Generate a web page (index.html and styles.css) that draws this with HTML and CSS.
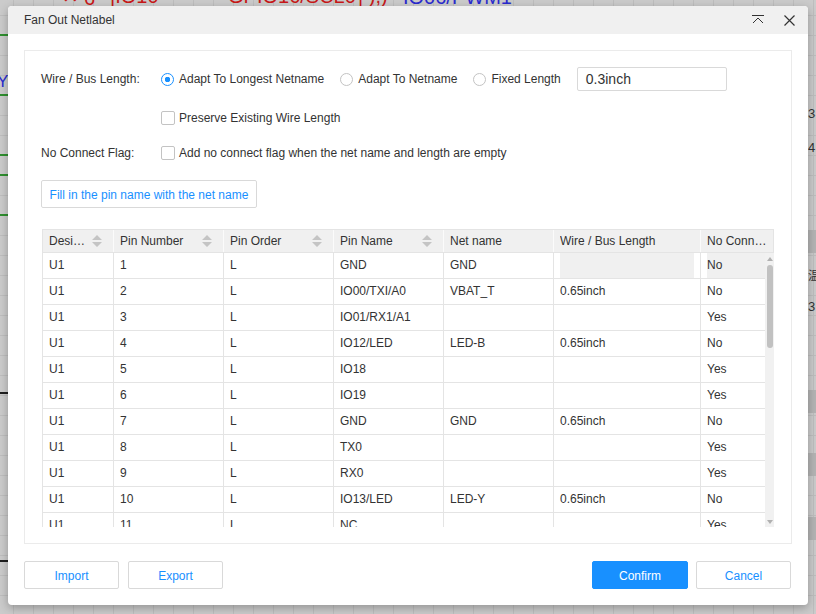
FILE: index.html
```html
<!DOCTYPE html>
<html>
<head>
<meta charset="utf-8">
<title>Fan Out Netlabel</title>
<link rel="stylesheet" href="styles.css">
</head>
<body>
<div class="canvas">
  <span class="cv-red cv-x">✕</span>
  <span class="cv-red cv-6">6</span>
  <span class="cv-red cv-io10">|IO10</span>
  <span class="cv-red cv-gpio">GPIO16/SCL0</span>
  <span class="cv-red cv-par">| ),)</span>
  <span class="cv-blue cv-io06">IO06/PWM1</span>
  <span class="cv-blue cv-y">Y</span>
  <div class="lw lw1"></div>
  <div class="lw lw2"></div>
  <div class="lw lw3"></div>
  <div class="lw lw4"></div>
  <div class="lw lw5"></div>
  <div class="lb lb1"></div>
  <div class="lb lb2"></div>
  <div class="rb rb1"></div>
  <div class="rb rb2"></div>
  <div class="rb rb3"></div>
  <div class="rb rb4"></div>
  <span class="rt rt1">3</span>
  <span class="rt rt2">4.</span>
  <span class="rt rt3">温</span>
  <span class="rt rt4">3</span>
</div>

<div class="dialog">
  <div class="dlg-head">
    <span class="title">Fan Out Netlabel</span>
    <div class="head-icons">
      <svg class="ic-collapse" width="12" height="9" viewBox="0 0 12 9"><path d="M0 0.5H12M1 8L6 3L11 8" fill="none" stroke="#333" stroke-width="1"/></svg>
      <svg class="ic-close" width="11" height="11" viewBox="0 0 11 11"><path d="M0.5 0.5L10.5 10.5M10.5 0.5L0.5 10.5" fill="none" stroke="#333" stroke-width="1.2"/></svg>
    </div>
  </div>

  <div class="dlg-body">
    <div class="panel">
      <div class="row">
        <span class="lbl">Wire / Bus Length:</span>
        <span class="radio on"><i></i>Adapt To Longest Netname</span>
        <span class="radio"><i></i>Adapt To Netname</span>
        <span class="radio"><i></i>Fixed Length</span>
        <div class="input">0.3inch</div>
      </div>
      <div class="row r2">
        <span class="lbl"></span>
        <span class="cb"></span>Preserve Existing Wire Length
      </div>
      <div class="row r3">
        <span class="lbl">No Connect Flag:</span>
        <span class="cb"></span>Add no connect flag when the net name and length are empty
      </div>
      <div class="fill-btn">Fill in the pin name with the net name</div>

      <div class="gtable">
        <div class="thead">
          <div class="th"><span class="txt">Designator</span><svg class="sort" width="10" height="12" viewBox="0 0 10 12"><path d="M5 0L10 5H0Z M0 7H10L5 12Z" fill="#c4c4c4"/></svg></div>
          <div class="th"><span class="txt">Pin Number</span><svg class="sort" width="10" height="12" viewBox="0 0 10 12"><path d="M5 0L10 5H0Z M0 7H10L5 12Z" fill="#c4c4c4"/></svg></div>
          <div class="th"><span class="txt">Pin Order</span><svg class="sort" width="10" height="12" viewBox="0 0 10 12"><path d="M5 0L10 5H0Z M0 7H10L5 12Z" fill="#c4c4c4"/></svg></div>
          <div class="th"><span class="txt">Pin Name</span><svg class="sort" width="10" height="12" viewBox="0 0 10 12"><path d="M5 0L10 5H0Z M0 7H10L5 12Z" fill="#c4c4c4"/></svg></div>
          <div class="th"><span class="txt">Net name</span></div>
          <div class="th"><span class="txt">Wire / Bus Length</span></div>
          <div class="th last"><span class="txt">No Connect Flag</span></div>
        </div>
        <div class="tbody-wrap">
          <div class="tbody">
            <div class="td">U1</div><div class="td">1</div><div class="td">L</div><div class="td">GND</div><div class="td">GND</div><div class="td ed"><div class="edbox"></div></div><div class="td ed nc"><div class="edbox">No</div></div>
            <div class="td">U1</div><div class="td">2</div><div class="td">L</div><div class="td">IO00/TXI/A0</div><div class="td">VBAT_T</div><div class="td">0.65inch</div><div class="td">No</div>
            <div class="td">U1</div><div class="td">3</div><div class="td">L</div><div class="td">IO01/RX1/A1</div><div class="td"></div><div class="td"></div><div class="td">Yes</div>
            <div class="td">U1</div><div class="td">4</div><div class="td">L</div><div class="td">IO12/LED</div><div class="td">LED-B</div><div class="td">0.65inch</div><div class="td">No</div>
            <div class="td">U1</div><div class="td">5</div><div class="td">L</div><div class="td">IO18</div><div class="td"></div><div class="td"></div><div class="td">Yes</div>
            <div class="td">U1</div><div class="td">6</div><div class="td">L</div><div class="td">IO19</div><div class="td"></div><div class="td"></div><div class="td">Yes</div>
            <div class="td">U1</div><div class="td">7</div><div class="td">L</div><div class="td">GND</div><div class="td">GND</div><div class="td">0.65inch</div><div class="td">No</div>
            <div class="td">U1</div><div class="td">8</div><div class="td">L</div><div class="td">TX0</div><div class="td"></div><div class="td"></div><div class="td">Yes</div>
            <div class="td">U1</div><div class="td">9</div><div class="td">L</div><div class="td">RX0</div><div class="td"></div><div class="td"></div><div class="td">Yes</div>
            <div class="td">U1</div><div class="td">10</div><div class="td">L</div><div class="td">IO13/LED</div><div class="td">LED-Y</div><div class="td">0.65inch</div><div class="td">No</div>
            <div class="td">U1</div><div class="td">11</div><div class="td">L</div><div class="td">NC</div><div class="td"></div><div class="td"></div><div class="td">Yes</div>
          </div>
          <div class="scroll">
            <svg class="arr" width="6" height="4" viewBox="0 0 6 4"><path d="M3 0L6 4H0Z" fill="#b0b0b0"/></svg>
            <div class="thumb"></div>
            <div class="sp"></div>
            <svg class="arr" width="6" height="4" viewBox="0 0 6 4"><path d="M0 0H6L3 4Z" fill="#b0b0b0"/></svg>
          </div>
        </div>
      </div>
    </div>
  </div>

  <div class="dlg-foot">
    <div class="btn">Import</div>
    <div class="btn">Export</div>
    <div class="sp"></div>
    <div class="btn primary">Confirm</div>
    <div class="btn">Cancel</div>
  </div>
</div>
</body>
</html>
```

FILE: styles.css
```css
* { box-sizing: border-box; }
html, body { margin: 0; padding: 0; }
body {
  width: 816px;
  height: 614px;
  position: relative;
  overflow: hidden;
  font-family: "Liberation Sans", Arial, sans-serif;
  font-size: 12px;
  color: #333;
}

/* background schematic canvas (dimmed) */
.canvas {
  position: absolute;
  inset: 0;
  background-color: #cbcbcb;
  background-image:
    linear-gradient(#bebebe 1px, transparent 1px),
    linear-gradient(90deg, #bebebe 1px, transparent 1px);
  background-size: 20px 20px;
  background-position: 13px 15px;
}
.cv-red, .cv-blue { position: absolute; font-size: 20px; line-height: 20px; white-space: nowrap; }
.cv-red { color: #c81818; }
.cv-blue { color: #2a2ad0; }
.cv-x { left: 62px; top: -14px; }
.cv-6 { left: 84px; top: -12px; }
.cv-io10 { left: 110px; top: -14px; }
.cv-gpio { left: 228px; top: -14px; }
.cv-par { left: 358px; top: -14px; }
.cv-io06 { left: 403px; top: -13px; }
.cv-y { left: -3px; top: 72px; font-size: 17px; }
.lw { position: absolute; left: 0; width: 8px; height: 2px; background: #2f8f2f; }
.lw1 { top: 34px; } .lw2 { top: 94px; } .lw3 { top: 154px; } .lw4 { top: 174px; } .lw5 { top: 214px; }
.lb { position: absolute; left: 0; width: 8px; height: 2px; background: #1f1f1f; }
.lb1 { top: 392px; } .lb2 { top: 560px; }
.rb { position: absolute; left: 808px; width: 8px; height: 23px; background: #b4b4b4; }
.rb1 { top: 230px; } .rb2 { top: 390px; } .rb3 { top: 453px; } .rb4 { top: 517px; }
.rt { position: absolute; left: 808px; font-size: 13px; line-height: 14px; color: #333; }
.rt1 { top: 107px; } .rt2 { top: 141px; }
.rt3 { top: 268px; font-family: "Noto Sans CJK SC", sans-serif; font-size: 12px; }
.rt4 { top: 300px; }

/* dialog */
.dialog {
  position: absolute;
  left: 8px;
  top: 6px;
  width: 800px;
  height: 599px;
  background: #fff;
  border-radius: 4px;
  box-shadow: 0 3px 10px rgba(0, 0, 0, 0.28);
  display: flex;
  flex-direction: column;
  overflow: hidden;
}
.dlg-head {
  height: 28px;
  flex: none;
  background: #f0f0f0;
  display: flex;
  align-items: center;
  padding: 0 13px 0 16px;
}
.title { flex: 1; }
.head-icons { display: flex; align-items: center; gap: 20px; }
.ic-collapse { display: block; margin-top: -2px; }
.ic-close { display: block; }

.dlg-body { padding: 16px 16px 0; flex: none; }
.panel {
  border: 1px solid #ebebeb;
  height: 494px;
  padding: 16px 16px 0;
}
.row { display: flex; align-items: center; height: 24px; white-space: nowrap; }
.r2 { margin-top: 15px; }
.r3 { margin-top: 11px; }
.lbl { width: 120px; flex: none; }
.radio { display: inline-flex; align-items: center; margin-right: 16px; }
.radio i {
  width: 13px;
  height: 13px;
  border: 1px solid #c3c3c3;
  border-radius: 50%;
  margin-right: 5px;
  background: #fff;
}
.radio.on i {
  border-color: #1890ff;
  background: radial-gradient(circle, #1890ff 0 2.5px, #fff 3px);
}
.input {
  width: 150px;
  height: 24px;
  border: 1px solid #d9d9d9;
  border-radius: 2px;
  padding-left: 8px;
  font-size: 14px;
  display: flex;
  align-items: center;
}
.cb {
  width: 14px;
  height: 14px;
  border: 1px solid #c3c3c3;
  border-radius: 2px;
  margin-right: 4px;
  flex: none;
}
.fill-btn {
  margin-top: 15px;
  width: 216px;
  height: 28px;
  border: 1px solid #d9d9d9;
  border-radius: 2px;
  color: #1890ff;
  display: flex;
  align-items: center;
  justify-content: center;
  padding-top: 1px;
}

/* table */
.gtable { margin: 21px 1px 0; width: 732px; }
.thead {
  display: grid;
  grid-template-columns: 71px 110px 110px 110px 110px 147px 74px;
  height: 24px;
  background: #f0f0f0;
  border-top: 1px solid #e4e4e4;
  border-bottom: 1px solid #e4e4e4;
}
.th {
  display: flex;
  align-items: center;
  border-left: 1px solid #fbfbfb;
  padding: 0 11px 0 6px;
  min-width: 0;
}
.th:first-child { border-left-color: #e4e4e4; }
.th.last { border-right: 1px solid #e4e4e4; padding-right: 6px; }
.txt { flex: 1; min-width: 0; white-space: nowrap; overflow: hidden; text-overflow: ellipsis; }
.sort { flex: none; margin-left: 6px; display: block; }

.tbody-wrap { display: flex; height: 274px; overflow: hidden; }
.tbody {
  width: 723px;
  flex: none;
  display: grid;
  grid-template-columns: 71px 110px 110px 110px 110px 147px 65px;
  grid-auto-rows: 26px;
  align-content: start;
}
.td {
  border-left: 1px solid #e4e4e4;
  border-bottom: 1px solid #e4e4e4;
  padding-left: 6px;
  line-height: 25px;
  white-space: nowrap;
  overflow: hidden;
}
.td.ed { padding: 0 6px 0 6px; }
.td.ed.nc { padding-right: 0; }
.edbox { height: 25px; background: #f0f0f0; }

.scroll {
  width: 9px;
  flex: none;
  background: #f1f1f1;
  display: flex;
  flex-direction: column;
  align-items: center;
  padding: 4px 0 3px;
}
.arr { display: block; flex: none; }
.thumb {
  margin-top: 4px;
  width: 6px;
  height: 83px;
  border-radius: 3px;
  background: #c1c1c1;
  flex: none;
}
.sp { flex: 1; }

/* footer */
.dlg-foot {
  display: flex;
  align-items: center;
  padding: 17px 17px 16px 16px;
  flex: none;
}
.btn {
  width: 95px;
  height: 28px;
  border: 1px solid #d9d9d9;
  border-radius: 2px;
  background: #fff;
  color: #1890ff;
  display: flex;
  align-items: center;
  justify-content: center;
  padding-top: 1px;
}
.btn + .btn { margin-left: 9px; }
.btn.primary {
  width: 96px;
  background: #1890ff;
  border-color: #1890ff;
  color: #fff;
}
.btn.primary + .btn { margin-left: 8px; }
```
